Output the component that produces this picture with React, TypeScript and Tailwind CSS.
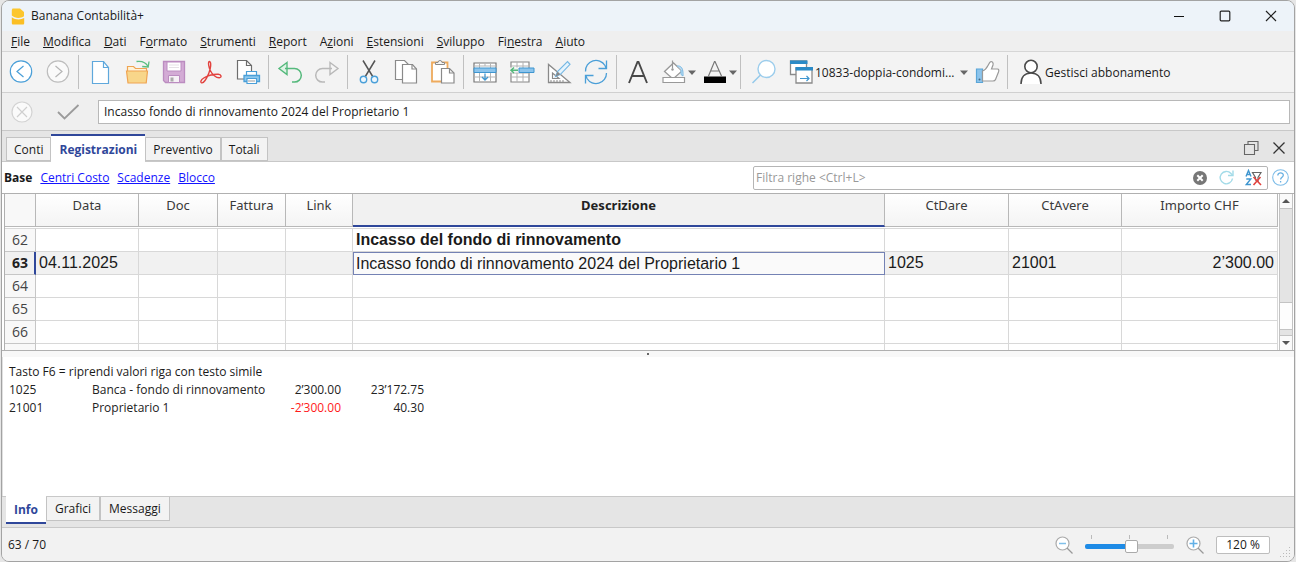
import { useState, type ReactNode } from "react";

const BLUE = "#4a9fd8";
const GREY = "#8a8a8a";

function Icon({ children, size = 26 }: { children: ReactNode; size?: number }) {
  return (
    <svg width={size} height={size} viewBox={`0 0 ${size} ${size}`} fill="none" aria-hidden="true" className="shrink-0">
      {children}
    </svg>
  );
}

const icons = {
  back: (
    <Icon>
      <circle cx="13" cy="12.5" r="10.7" fill="#fff" stroke={BLUE} strokeWidth="1.2" />
      <path d="M15.5 7 9 12.5l6.500 5.500" stroke={BLUE} strokeWidth="1.2" />
    </Icon>
  ),
  forward: (
    <Icon>
      <circle cx="13" cy="12.5" r="10.700" fill="#fafafa" stroke="#bdbdbd" strokeWidth="1.2" />
      <path d="m10.500 7 6.500 5.500-6.500 5.500" stroke="#b5b5b5" strokeWidth="1.2" />
    </Icon>
  ),
  file: (
    <Icon>
      <path d="M5.500 2.500h11l5 6v16h-16z" fill="#fff" stroke="#5fa8dc" strokeWidth="1.2" />
      <path d="M16.500 2.500v6h5" stroke="#5fa8dc" strokeWidth="1.2" />
    </Icon>
  ),
  open: (
    <Icon>
      <path d="M3.500 12V7.500h6l2 2h11V12" fill="#fff3d8" stroke="#efa452" strokeWidth="1.200" />
      <path d="M2.500 12h21l-1.300 12H4z" fill="#f8d68a" stroke="#efa452" strokeWidth="1.200" />
      <path d="M12.500 2.500c6-.8 9.500 1 11.500 5M25 2.500l-.8 5.500-6-.5" stroke="#5bbf82" strokeWidth="1.300" />
    </Icon>
  ),
  save: (
    <Icon>
      <path d="M2.500 2.500h21v21h-19l-2-2z" fill="#d3abd5" stroke="#bb8cc0" strokeWidth="1.300" />
      <path d="M6 3h14v9H6z" fill="#fff" stroke="#bb8cc0" />
      <path d="M7.500 16.500h11v7h-11z" fill="#f6f0f6" stroke="#bb8cc0" />
      <path d="M9.500 18.500h3v4h-3z" fill="#aaa" />
      <path d="M8 6h10M8 8.500h10" stroke="#e5e1e5" />
    </Icon>
  ),
  pdf: (
    <Icon>
      <path
        d="M11.300 2.500c-1.600.6-.4 6 1 9 1.800 4 6 7.500 9 7.300 2.700-.3 2.200-3.300-1-3.500-5-.2-10 .8-14.500 3.700-3.200 2-3.600 4.300-2.200 4.800 2 .6 5.200-4.500 7.200-9.500 1.800-4.500 3-11.400.5-11.800Z"
        stroke="#e2433f"
        strokeWidth="1.400"
      />
    </Icon>
  ),
  print: (
    <Icon>
      <path d="M2.500 1.500h9l5 5V20h-14z" fill="#fff" stroke="#6d6d6d" strokeWidth="1.200" />
      <path d="M11.500 1.500v5h5" stroke="#6d6d6d" strokeWidth="1.200" />
      <path d="M11.500 12.500h10v4h-10z" fill="#fff" stroke={BLUE} strokeWidth="1.200" />
      <path d="M9 16.500h15.500v6H9z" fill="#8ec9ee" stroke={BLUE} strokeWidth="1.300" />
      <path d="M12 19.500h9.500v5H12z" fill="#fff" stroke={BLUE} strokeWidth="1.200" />
      <path d="M13 22h7" stroke="#9b9b9b" />
    </Icon>
  ),
  undo: (
    <Icon>
      <path d="m10 3.500-8 6 8 6v-6z" fill="#dff3e6" stroke="#55b97c" strokeWidth="1.400" />
      <path d="M8 9.500h9.500a6.800 6.800 0 0 1 0 13.600H15" stroke="#55b97c" strokeWidth="1.500" />
    </Icon>
  ),
  redo: (
    <Icon>
      <path d="m16 3.500 8 6-8 6v-6z" fill="#f5f5f5" stroke="#b9b9b9" strokeWidth="1.400" />
      <path d="M18 9.500H8.500a6.800 6.800 0 0 0 0 13.600H11" stroke="#b9b9b9" strokeWidth="1.500" />
    </Icon>
  ),
  cut: (
    <Icon>
      <path d="M7 1.500 17 18M19 1.500 9 18" stroke="#555" strokeWidth="1.500" />
      <circle cx="7.500" cy="20.500" r="3.200" fill="#eef7fd" stroke={BLUE} strokeWidth="1.400" />
      <circle cx="18.500" cy="20.500" r="3.200" fill="#eef7fd" stroke={BLUE} strokeWidth="1.400" />
    </Icon>
  ),
  copy: (
    <Icon>
      <path d="M2.500 1.500h9l4 4v15h-13z" fill="#fff" stroke={GREY} strokeWidth="1.200" />
      <path d="M9.500 5.500h10l4 4.500v14h-14z" fill="#fff" stroke={GREY} strokeWidth="1.200" />
      <path d="M19 5.500V10h4.500" stroke={GREY} strokeWidth="1.200" />
    </Icon>
  ),
  paste: (
    <Icon>
      <path d="M2 3.500h15.500v19H2z" fill="#fff" stroke="#eeaa5c" strokeWidth="1.800" />
      <path d="M5.500 5.500v-2h2.500a2 2 0 0 1 4 0h2.500v2z" fill="#f5f5f5" stroke={GREY} />
      <path d="M11.500 9.500h8l4.500 4.500v10H11.500z" fill="#fff" stroke={GREY} strokeWidth="1.200" />
      <path d="M19.500 9.500V14H24" stroke={GREY} strokeWidth="1.200" />
    </Icon>
  ),
  insertRow: (
    <Icon>
      <path d="M2 4h22v19H2z" fill="#fff" stroke="#777" strokeWidth="1.200" />
      <path d="M2 7h22M2 18h22M7.500 4v19M18.500 4v19M13 4v3" stroke="#b5b5b5" />
      <path d="M2 9h22v4.500H2z" fill="#8cc4ec" stroke="#3f96d0" />
      <path d="M13 14.500V21M10 18l3 3 3-3" stroke="#3f96d0" strokeWidth="1.300" />
    </Icon>
  ),
  moveRow: (
    <Icon>
      <path d="M2 3h18v20H2z" fill="#fff" stroke="#888" strokeWidth="1.200" />
      <path d="M2 7h18M2 14h18M2 18h18M8 3v20M14 3v20" stroke="#b2b2b2" />
      <path d="M0 8.500h11v5H0z" fill="#f3f3f3" />
      <path d="M10 9h15v4.500H10z" fill="#8cc4ec" stroke="#3f96d0" />
      <path d="M9 11.300H2M5 8.500l-3 2.800L5 14" stroke="#55b97c" strokeWidth="1.500" />
    </Icon>
  ),
  design: (
    <Icon>
      <path d="M2.500 5.500v18H24z" fill="#fff" stroke={GREY} strokeWidth="1.300" />
      <path d="M6.500 14v5.500H13z" stroke={GREY} strokeWidth="1.200" />
      <path d="M5 23v-2m3 2v-2m3 2v-2m3 2v-2m3 2v-2" stroke={GREY} />
      <path d="m9.500 17.500 2-5 10-10 2.500 2.800-9.500 10z" fill="#e5f4fd" stroke="#76b8e4" strokeWidth="1.200" />
      <path d="m9.500 17.500 2-5 3 2.800z" fill="#888" />
    </Icon>
  ),
  refresh: (
    <Icon>
      <path d="M2.500 12.500A10.500 10.500 0 0 1 22 6.500l1 2.500M23.500 14A10.500 10.500 0 0 1 4 19.500L3 17" stroke={BLUE} strokeWidth="1.300" />
      <path d="M23.500 1.500v8h-8M2.500 24.500v-8h8" stroke={BLUE} strokeWidth="1.300" />
    </Icon>
  ),
  font: (
    <Icon>
      <path d="M4 24 12.500 3h1L22 24M7 17h12" stroke="#484848" strokeWidth="1.900" />
    </Icon>
  ),
  fill: (
    <Icon>
      <path d="m3.500 12.500 9-8.500 8.500 8-9 8z" fill="#fff" stroke="#999" strokeWidth="1.300" />
      <path d="M11.500 1.500v8" stroke="#999" strokeWidth="1.200" />
      <circle cx="11.500" cy="10.500" r="1.200" fill="#999" />
      <path d="M16 7c4-.5 6.500 2 6 10l-2-1.500V11" fill="#b9dcf3" stroke="#7dbbe4" />
      <path d="M2 18.500h21.500v5H2z" fill="#fff" stroke="#999" strokeWidth="1.200" />
    </Icon>
  ),
  fontColor: (
    <Icon>
      <path d="M6.500 17 12.500 2.500h.5L19.500 17M9 12h8" stroke="#777" strokeWidth="1.200" />
      <path d="M2 17.500h22v6.500H2z" fill="#000" />
    </Icon>
  ),
  search: (
    <Icon>
      <circle cx="15.500" cy="10" r="8.500" fill="#fff" stroke="#9ccdec" strokeWidth="1.400" />
      <path d="m9.500 16-8 8" stroke="#92c8ea" strokeWidth="1.500" />
    </Icon>
  ),
  windows: (
    <Icon>
      <path d="M2.500 2h16v13.500h-16z" fill="#fff" stroke={GREY} strokeWidth="1.300" />
      <path d="M2 1.500h17.500v3.500H2z" fill="#2b8ac6" />
      <path d="M8 9h16v15H8z" fill="#fff" stroke={GREY} strokeWidth="1.300" />
      <path d="M7.500 8H25v3.500H7.500z" fill="#2b8ac6" />
      <path d="M12 19.500h9M18.500 17l2.500 2.500-2.500 2.500" stroke="#3f96d0" strokeWidth="1.200" />
    </Icon>
  ),
  thumb: (
    <Icon>
      <path d="M2.500 10h6v13.500h-6z" fill="#8cc4ec" stroke="#5ba6d8" strokeWidth="1.200" />
      <circle cx="5.500" cy="20.500" r="1" fill="#416a86" />
      <path
        d="M8.500 12c3-1 4.500-3.500 5.500-5.500 1-2 1.500-3.500 3-4 1.500 0 2.500 1.500 2 3.500L17.500 10h6c1.500 0 1.500 1.500 1 3l-3 7.500c-.5 1.300-1 1.500-2.500 1.500H8.500z"
        fill="#fff"
        stroke="#999"
        strokeWidth="1.200"
      />
    </Icon>
  ),
  user: (
    <Icon>
      <path d="M3 25c0-7 4-11 10-11s10 4 10 11" fill="#fff" stroke="#4a4a4a" strokeWidth="1.600" />
      <circle cx="13" cy="7.500" r="6.200" fill="#fff" stroke="#4a4a4a" strokeWidth="1.600" />
    </Icon>
  ),
};

function ToolButton({ label, icon }: { label: string; icon: ReactNode }) {
  return (
    <button type="button" aria-label={label} className="flex h-full w-[37px] shrink-0 items-center justify-center">
      {icon}
    </button>
  );
}

function Separator() {
  return (
    <div className="flex h-full w-[5px] shrink-0 justify-center py-[3px]">
      <div className="w-px bg-[#c0c0c0]" />
    </div>
  );
}

function Caret() {
  return (
    <svg width="8" height="5" viewBox="0 0 8 5" aria-hidden="true" className="shrink-0">
      <path d="M0 .5h8L4 5z" fill="#666" />
    </svg>
  );
}

function DropButton({ label, icon }: { label: string; icon: ReactNode }) {
  return (
    <button type="button" aria-label={label} className="flex h-full w-[41px] shrink-0 items-center pl-[5px]">
      {icon}
      <span className="pl-px">
        <Caret />
      </span>
    </button>
  );
}

const menus: [string, string, string][] = [
  ["", "F", "ile"],
  ["", "M", "odifica"],
  ["", "D", "ati"],
  ["F", "o", "rmato"],
  ["", "S", "trumenti"],
  ["", "R", "eport"],
  ["A", "z", "ioni"],
  ["", "E", "stensioni"],
  ["", "S", "viluppo"],
  ["Fi", "n", "estra"],
  ["", "A", "iuto"],
];

const columns = [
  { name: "Data", width: "w-[103px]" },
  { name: "Doc", width: "w-[79px]" },
  { name: "Fattura", width: "w-[68px]" },
  { name: "Link", width: "w-[67px]" },
  { name: "Descrizione", width: "" },
  { name: "CtDare", width: "w-[124px]" },
  { name: "CtAvere", width: "w-[113px]" },
  { name: "Importo CHF", width: "w-[156px]" },
];

const rows = [
  { n: 62, cells: ["", "", "", "", "Incasso del fondo di rinnovamento", "", "", ""] },
  { n: 63, cells: ["04.11.2025", "", "", "", "Incasso fondo di rinnovamento 2024 del Proprietario 1", "1025", "21001", "2’300.00"] },
  { n: 64, cells: ["", "", "", "", "", "", "", ""] },
  { n: 65, cells: ["", "", "", "", "", "", "", ""] },
  { n: 66, cells: ["", "", "", "", "", "", "", ""] },
];

function TitleBar() {
  return (
    <header className="flex h-[30px] shrink-0 items-center bg-[#edf3f9] pl-[9px]">
      <svg width="14" height="17" viewBox="0 0 14 17" aria-hidden="true">
        <path d="M1.500 .5H9l4 3.500v4.200C9.500 10.700 4 10.500.8 7.500V2z" fill="#fcc62d" />
        <path d="M.8 9.300c3.500 2.700 8.700 2.900 12.400.8v4.900c0 1-.5 1.500-1.500 1.500H2.300c-1 0-1.500-.5-1.500-1.500z" fill="#fbbf25" />
      </svg>
      <h1 className="pl-[6px] text-[12px]">Banana Contabilità+</h1>
      <div className="ml-auto flex h-full">
        <button type="button" aria-label="Riduci a icona" className="flex w-[46px] items-center justify-center">
          <svg width="12" height="12" viewBox="0 0 12 12">
            <path d="M1 6.500h10" stroke="#111" />
          </svg>
        </button>
        <button type="button" aria-label="Ingrandisci" className="flex w-[46px] items-center justify-center">
          <svg width="12" height="12" viewBox="0 0 12 12" fill="none">
            <rect x="1.200" y="1.200" width="9.600" height="9.600" rx="1" stroke="#222" strokeWidth="1.200" />
          </svg>
        </button>
        <button type="button" aria-label="Chiudi" className="flex w-[46px] items-center justify-center">
          <svg width="12" height="12" viewBox="0 0 12 12">
            <path d="m1 1 10 10M11 1 1 11" stroke="#222" strokeWidth="1.200" />
          </svg>
        </button>
      </div>
    </header>
  );
}

function Toolbar() {
  return (
    <div className="flex h-[41px] shrink-0 items-center overflow-hidden border-b border-[#d0d0d0] bg-[#f3f3f3]">
      <ToolButton label="Indietro" icon={icons.back} />
      <ToolButton label="Avanti" icon={icons.forward} />
      <Separator />
      <ToolButton label="Nuovo" icon={icons.file} />
      <ToolButton label="Apri" icon={icons.open} />
      <ToolButton label="Salva" icon={icons.save} />
      <ToolButton label="Crea PDF" icon={icons.pdf} />
      <ToolButton label="Stampa" icon={icons.print} />
      <Separator />
      <ToolButton label="Annulla" icon={icons.undo} />
      <ToolButton label="Ripeti" icon={icons.redo} />
      <Separator />
      <ToolButton label="Taglia" icon={icons.cut} />
      <ToolButton label="Copia" icon={icons.copy} />
      <ToolButton label="Incolla" icon={icons.paste} />
      <Separator />
      <ToolButton label="Inserisci righe" icon={icons.insertRow} />
      <ToolButton label="Aggiungi righe" icon={icons.moveRow} />
      <ToolButton label="Imposta colonne" icon={icons.design} />
      <ToolButton label="Ricalcola" icon={icons.refresh} />
      <Separator />
      <ToolButton label="Carattere" icon={icons.font} />
      <DropButton label="Colore di sfondo" icon={icons.fill} />
      <DropButton label="Colore del testo" icon={icons.fontColor} />
      <Separator />
      <button type="button" aria-label="Cerca" className="flex w-[41px] shrink-0 items-center justify-center">
        {icons.search}
      </button>
      <button type="button" className="flex w-[184px] shrink-0 items-center pl-1 text-[12px]">
        {icons.windows}
        <span className="whitespace-nowrap pt-px pl-px">10833-doppia-condomi...</span>
        <span className="ml-auto">
          <Caret />
        </span>
      </button>
      <ToolButton label="Mi piace" icon={icons.thumb} />
      <Separator />
      <button type="button" className="flex shrink-0 items-center pl-2 text-[12px]">
        {icons.user}
        <span className="whitespace-nowrap pt-px pl-px">Gestisci abbonamento</span>
      </button>
    </div>
  );
}

function EditBar() {
  const [text, setText] = useState("Incasso fondo di rinnovamento 2024 del Proprietario 1");
  return (
    <div className="flex h-[37px] shrink-0 items-center bg-[#efefef] pr-1">
      <button type="button" aria-label="Annulla modifica" className="flex w-10 justify-center">
        <Icon size={22}>
          <circle cx="11" cy="11" r="10" fill="#fafafa" stroke="#d3d3d3" strokeWidth="1.200" />
          <path d="m6 6 10 10M16 6 6 16" stroke="#cfcfcf" strokeWidth="1.200" />
        </Icon>
      </button>
      <button type="button" aria-label="Conferma modifica" className="mr-1 flex w-[52px] justify-center">
        <Icon>
          <path d="m3 13 6.500 6.500L23.500 6" stroke="#9b9b9b" strokeWidth="1.800" />
        </Icon>
      </button>
      <input
        aria-label="Contenuto della cella"
        value={text}
        onChange={(e) => setText(e.target.value)}
        className="h-6 min-w-0 flex-1 border border-[#b8b8b8] bg-white px-[5px] text-[12px] outline-none"
      />
    </div>
  );
}

function TableTabs() {
  const side = "h-6 border border-[#c3c3c3] bg-[#f3f3f3] px-[7px] pt-[2px] text-[12px] whitespace-nowrap";
  return (
    <div className="flex h-8 shrink-0 items-end border-t border-b border-[#c8c8c8] bg-[#e5e5e5] pl-1">
      <div role="tablist" aria-label="Tabelle" className="flex items-end">
        <button type="button" role="tab" aria-selected={false} className={side}>
          Conti
        </button>
        <button
          type="button"
          role="tab"
          aria-selected
          className="-mb-px h-7 whitespace-nowrap border-t-2 border-[#2f479a] bg-white px-2 pt-px text-[12px] font-bold text-[#2f479a]"
        >
          Registrazioni
        </button>
        <button type="button" role="tab" aria-selected={false} className={side}>
          Preventivo
        </button>
        <button type="button" role="tab" aria-selected={false} className={side}>
          Totali
        </button>
      </div>
      <div className="ml-auto flex h-full items-center gap-[13px] pt-1 pr-2">
        <button type="button" aria-label="Ripristina finestra">
          <svg width="16" height="16" viewBox="0 0 16 16" fill="none">
            <path d="M5 4.500V1.500h10v9h-3.500" stroke="#666" strokeWidth="1.100" />
            <path d="M1.500 4.500h10v10h-10z" stroke="#666" strokeWidth="1.100" />
          </svg>
        </button>
        <button type="button" aria-label="Chiudi tabella">
          <svg width="14" height="14" viewBox="0 0 14 14">
            <path d="m1.500 1.500 11 11M12.500 1.500l-11 11" stroke="#333" strokeWidth="1.300" />
          </svg>
        </button>
      </div>
    </div>
  );
}

function FilterBar() {
  return (
    <div className="flex h-[31px] shrink-0 items-center bg-white pl-[2px] pr-[5px] text-[12px]">
      <nav aria-label="Viste" className="flex gap-2 whitespace-nowrap">
        <span className="font-bold">Base</span>
        <a href="#centri-costo" className="text-[#1414ff] underline">Centri Costo</a>
        <a href="#scadenze" className="text-[#1414ff] underline">Scadenze</a>
        <a href="#blocco" className="text-[#1414ff] underline">Blocco</a>
      </nav>
      <div className="ml-auto flex h-6 w-[515px] items-center rounded-xs border border-[#b5b5b5] bg-white pl-[2px] pr-[5px]">
        <input
          type="text"
          aria-label="Filtra righe"
          placeholder="Filtra righe <Ctrl+L>"
          className="min-w-0 flex-1 text-[12px] outline-none placeholder:text-[#999]"
        />
        <div className="flex items-center gap-[10px]">
          <button type="button" aria-label="Cancella filtro">
            <svg width="16" height="16" viewBox="0 0 16 16">
              <circle cx="8" cy="8" r="7" fill="#777" />
              <path d="m5.300 5.300 5.400 5.400M10.700 5.300l-5.400 5.400" stroke="#fff" strokeWidth="2" />
            </svg>
          </button>
          <button type="button" aria-label="Aggiorna filtro">
            <svg width="17" height="17" viewBox="0 0 17 17" fill="none">
              <path d="M14.500 9.500A6.200 6.200 0 1 1 13 4.500l1.500 1.500" stroke="#a3dbe8" strokeWidth="1.400" />
              <path d="M15 1.500v5h-5" stroke="#a3dbe8" strokeWidth="1.400" />
            </svg>
          </button>
          <button type="button" aria-label="Rimuovi ordinamento">
            <svg width="17" height="17" viewBox="0 0 17 17" fill="none">
              <path d="m1 7.500 2.500-6 2.500 6M2 5.500h3M1.300 10h4.500l-4.500 5.500H6" stroke="#3f96d0" strokeWidth="1.400" />
              <path d="M7.500 3.500h8.500l-3 5v4l-2.500-1.500V8.500z" stroke="#666" strokeWidth="1.200" />
              <path d="m8.500 8 7.500 8M15.500 8l-7 8" stroke="#e2433f" strokeWidth="1.600" />
            </svg>
          </button>
        </div>
      </div>
      <button type="button" aria-label="Aiuto" className="pl-[4px]">
        <svg width="17" height="17" viewBox="0 0 17 17" fill="none">
          <circle cx="8.500" cy="8.500" r="7.800" stroke="#7fbde8" strokeWidth="1.100" />
          <path d="M5.800 6.500c0-3.500 5.700-3.300 5.500-.2-.1 1.900-2.700 2-2.700 4.200M8.600 12v1.400" stroke="#68b0e2" strokeWidth="1.300" />
        </svg>
      </button>
    </div>
  );
}

function Ledger() {
  return (
    <section className="flex h-[158px] shrink-0 border-y border-[#b0b0b0] bg-white pl-[2px] pr-px">
      <div className="min-w-0 flex-1 overflow-hidden border-l border-[#b0b0b0]">
        <table className="w-full table-fixed border-separate border-spacing-0">
          <thead>
            <tr className="h-[33px] align-top font-['Noto_Sans'] text-[13px] text-[#3a3a3a]">
              <th aria-label="Riga" className="w-[31px] border-r border-b border-[#b8b8b8] bg-[#f8f8f8]" />
              {columns.map((c) =>
                c.name === "Descrizione" ? (
                  <th key={c.name} className="border-r border-b-2 border-r-[#b8b8b8] border-b-[#2f479a] bg-[#f1f1f1] pt-[2px] leading-[18px] font-bold text-[#222]">
                    {c.name}
                  </th>
                ) : (
                  <th key={c.name} className={`${c.width} border-r border-b border-[#b8b8b8] bg-linear-to-b from-white to-[#f4f4f4] pt-[2px] leading-[18px] font-normal`}>
                    {c.name}
                  </th>
                ),
              )}
            </tr>
            <tr className="h-[2px]">
              <td colSpan={9} className="border-b border-[#d8d8d8] p-0" />
            </tr>
          </thead>
          <tbody>
            {rows.map((r) => {
              const current = r.n === 63;
              return (
                <tr key={r.n} className={current ? "h-[23px] bg-[#f1f1f1]" : "h-[23px]"}>
                  <th
                    className={
                      current
                        ? "border-r-2 border-b border-r-[#2f479a] border-b-[#c6c6c6] bg-[#f1f1f1] p-0 pr-[6px] text-right text-[14px] leading-[22px] font-bold text-[#222]"
                        : "border-r border-b border-[#c6c6c6] bg-[#f8f8f8] p-0 pr-[7px] text-right text-[14px] leading-[22px] font-normal text-[#444]"
                    }
                  >
                    {r.n}
                  </th>
                  {r.cells.map((text, i) => (
                    <td
                      key={i}
                      className={[
                        "overflow-hidden p-0 font-['Liberation_Sans',sans-serif] text-[16px] whitespace-nowrap",
                        current && i === 4
                          ? "border border-[#7482b4] bg-[#fafafa] px-[2px] leading-[21px]"
                          : "border-r border-b border-[#d8d8d8] px-[3px] leading-[22px]",
                        r.n === 62 ? "font-bold" : "",
                        i === 7 ? "text-right" : "",
                      ].join(" ")}
                    >
                      {text}
                    </td>
                  ))}
                </tr>
              );
            })}
            <tr className="h-[23px]">
              <th aria-label="Riga successiva" className="border-r border-[#c6c6c6] bg-[#f8f8f8]" />
              {columns.map((c) => (
                <td key={c.name} className="border-r border-[#d8d8d8]" />
              ))}
            </tr>
          </tbody>
        </table>
      </div>
      <div className="ml-px flex w-[14px] shrink-0 flex-col border-x border-[#c3c3c3] bg-[#e4e4e4]">
        <button type="button" aria-label="Scorri su" className="flex h-[15px] items-center justify-center border-b border-[#c3c3c3] bg-[#fafafa]">
          <svg width="8" height="4" viewBox="0 0 8 4"><path d="M0 4h8L4 0z" fill="#555" /></svg>
        </button>
        <div className="flex-1" />
        <div className="h-7 border-y border-[#c3c3c3] bg-[#fdfdfd]" />
        <div className="h-[5px]" />
        <button type="button" aria-label="Scorri giù" className="flex h-[15px] items-center justify-center border-t border-[#c3c3c3] bg-[#fafafa]">
          <svg width="8" height="4" viewBox="0 0 8 4"><path d="M0 0h8L4 4z" fill="#555" /></svg>
        </button>
      </div>
    </section>
  );
}

function InfoPanel() {
  return (
    <section className="flex-1 border-l border-[#e0e0e0] bg-white px-[6px] pt-[6px] text-[12px] leading-[18px]">
      <p>Tasto F6 = riprendi valori riga con testo simile</p>
      <table className="table-fixed text-[#222]">
        <tbody>
          <tr>
            <td className="w-[83px] p-0">1025</td>
            <td className="w-[174px] p-0 whitespace-nowrap">Banca - fondo di rinnovamento</td>
            <td className="w-[75px] p-0 text-right">2’300.00</td>
            <td className="w-[83px] p-0 text-right">23’172.75</td>
          </tr>
          <tr>
            <td className="p-0">21001</td>
            <td className="p-0">Proprietario 1</td>
            <td className="p-0 text-right text-[#ff1a1a]">-2’300.00</td>
            <td className="p-0 text-right">40.30</td>
          </tr>
        </tbody>
      </table>
    </section>
  );
}

function InfoTabs() {
  const side = "h-6 border border-t-0 border-[#c3c3c3] bg-[#f3f3f3] px-[8px] pt-px whitespace-nowrap";
  return (
    <div role="tablist" aria-label="Pannello informazioni" className="flex h-8 shrink-0 items-start border-y border-[#c8c8c8] bg-[#e5e5e5] pl-1 text-[12px]">
      <button type="button" role="tab" aria-selected className="-mt-px h-7 border-b-2 border-[#2f479a] bg-white px-[8px] pt-px font-bold text-[#2f479a]">
        Info
      </button>
      <button type="button" role="tab" aria-selected={false} className={side}>Grafici</button>
      <button type="button" role="tab" aria-selected={false} className={side}>Messaggi</button>
    </div>
  );
}

function StatusBar() {
  const [zoom, setZoom] = useState(53);
  return (
    <footer className="relative flex h-[33px] shrink-0 items-center bg-[#f2f2f2] pl-[6px] pr-6 text-[12px]">
      <span>63 / 70</span>
      <div className="ml-auto flex items-center gap-3">
        <button type="button" aria-label="Riduci zoom">
          <Icon size={18}>
            <circle cx="7.500" cy="7.500" r="6.500" fill="#fff" stroke="#aaa" strokeWidth="1.200" />
            <path d="m12 12 5.500 5.500" stroke="#999" strokeWidth="1.300" />
            <path d="M4 7.500h7" stroke="#80c0ea" strokeWidth="1.500" />
          </Icon>
        </button>
        <div className="flex w-[89px] flex-col">
          <div className="flex h-[4px] justify-between px-[6px]" aria-hidden="true">
            <span className="w-px bg-[#bbb]" />
            <span className="w-px bg-[#bbb]" />
            <span className="w-px bg-[#bbb]" />
          </div>
          <input
            type="range"
            aria-label="Zoom"
            min={0}
            max={100}
            value={zoom}
            onChange={(e) => setZoom(Number(e.target.value))}
            className="h-4 w-full appearance-none bg-transparent [&::-webkit-slider-runnable-track]:h-[5px] [&::-webkit-slider-runnable-track]:rounded-xs [&::-webkit-slider-runnable-track]:bg-linear-to-r [&::-webkit-slider-runnable-track]:from-[#1e8be6] [&::-webkit-slider-runnable-track]:from-50% [&::-webkit-slider-runnable-track]:to-[#cdcdcd] [&::-webkit-slider-runnable-track]:to-50% [&::-webkit-slider-thumb]:-mt-[4px] [&::-webkit-slider-thumb]:h-[13px] [&::-webkit-slider-thumb]:w-[13px] [&::-webkit-slider-thumb]:appearance-none [&::-webkit-slider-thumb]:rounded-xs [&::-webkit-slider-thumb]:border [&::-webkit-slider-thumb]:border-[#aaa] [&::-webkit-slider-thumb]:bg-white"
          />
        </div>
        <button type="button" aria-label="Aumenta zoom">
          <Icon size={18}>
            <circle cx="7.500" cy="7.500" r="6.500" fill="#fff" stroke="#aaa" strokeWidth="1.200" />
            <path d="m12 12 5.500 5.500" stroke="#999" strokeWidth="1.300" />
            <path d="M3.500 7.500h8M7.500 3.500v8" stroke="#62b0e6" strokeWidth="1.600" />
          </Icon>
        </button>
        <button type="button" className="h-[18px] w-[54px] rounded-xs border border-[#bdbdbd] bg-white leading-[16px]">
          120 %
        </button>
      </div>
      <svg width="12" height="12" viewBox="0 0 12 12" aria-hidden="true" className="absolute right-0.5 bottom-0.5" fill="#bbb">
        <path d="M9 0h1v1H9zM6 3h1v1H6zM9 3h1v1H9zM3 6h1v1H3zM6 6h1v1H6zM9 6h1v1H9zM0 9h1v1H0zM3 9h1v1H3zM6 9h1v1H6zM9 9h1v1H9z" />
      </svg>
    </footer>
  );
}

export default function App() {
  return (
    <div className="flex min-h-screen flex-col bg-[#e6e6e6] px-px font-['Open_Sans','Noto_Sans',sans-serif] text-[#1a1a1a]">
      <div className="flex flex-1 flex-col overflow-hidden rounded-lg border border-[#a3a3a3] bg-[#efefef]">
        <TitleBar />
        <nav aria-label="Menu" className="flex h-[21px] shrink-0 items-center gap-[13px] border-b border-[#d6d6d6] bg-[#efefef] pt-px pl-[9px] text-[12px]">
          {menus.map(([a, u, b]) => (
            <button type="button" key={a + u + b} className="whitespace-nowrap">
              {a}
              <span className="underline">{u}</span>
              {b}
            </button>
          ))}
        </nav>
        <Toolbar />
        <EditBar />
        <TableTabs />
        <FilterBar />
        <Ledger />
        <div className="flex h-[6px] shrink-0 justify-center bg-[#f8f8f8] pt-[2px]">
          <span className="h-[2px] w-[2px] bg-[#666]" />
        </div>
        <InfoPanel />
        <InfoTabs />
        <StatusBar />
      </div>
    </div>
  );
}
